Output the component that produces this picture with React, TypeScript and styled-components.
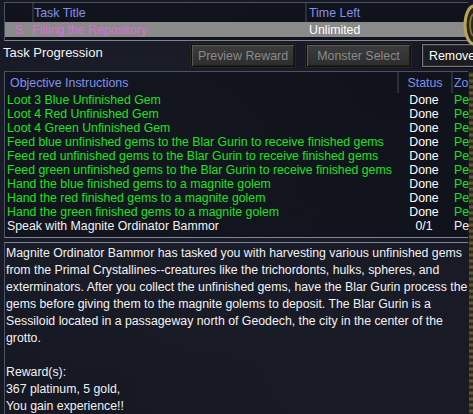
import React from "react";
import styled, { createGlobalStyle } from "styled-components";

const Global = createGlobalStyle`
  html, body { margin: 0; padding: 0; background: #151823; }
  * { box-sizing: border-box; }
`;

const Window = styled.div`
  position: relative;
  width: 473px;
  height: 414px;
  overflow: hidden;
  background:
    radial-gradient(ellipse at 30% 40%, rgba(40, 44, 60, 0.35), transparent 60%),
    radial-gradient(ellipse at 80% 80%, rgba(30, 30, 45, 0.4), transparent 50%),
    #161923;
  font-family: "Liberation Sans", Arial, sans-serif;
  font-size: 12.3px;
  color: #ffffff;
  display: flex;
  flex-direction: column;
  padding: 2px 0 0 4px;
`;

const Panel = styled.div<{ $h: number }>`
  height: ${(p) => p.$h}px;
  margin-right: 5px;
  border: 1px solid #4b5263;
  border-right: none;
  border-bottom-color: #7d8497;
  background: rgba(12, 14, 22, 0.55);
  display: flex;
  flex-direction: column;
  flex-shrink: 0;
`;

const Row = styled.div<{ $cols: string; $h: number; $sel?: boolean }>`
  display: grid;
  grid-template-columns: ${(p) => p.$cols};
  height: ${(p) => p.$h}px;
  align-items: center;
  background: ${(p) => (p.$sel ? "#8a8a8a" : "transparent")};
  white-space: nowrap;
  flex-shrink: 0;
`;

const HeadCell = styled.div<{ $divider?: boolean; $center?: boolean; $pl?: number }>`
  color: #8190ec;
  font-size: 12.4px;
  height: 100%;
  display: flex;
  align-items: center;
  justify-content: ${(p) => (p.$center ? "center" : "flex-start")};
  padding-left: ${(p) => p.$pl ?? 0}px;
  border-left: ${(p) => (p.$divider ? "2px solid #2b2f3a" : "none")};
  overflow: hidden;
`;

const Cell = styled.div<{ $color?: string; $center?: boolean; $pl?: number }>`
  color: ${(p) => p.$color || "#ffffff"};
  font-size: 12.3px;
  overflow: hidden;
  text-align: ${(p) => (p.$center ? "center" : "left")};
  padding-left: ${(p) => p.$pl ?? 0}px;
  line-height: 14px;
`;

const ProgressBar = styled.div`
  display: flex;
  align-items: flex-start;
  height: 30px;
  flex-shrink: 0;
  margin-left: -1px;
  padding-top: 3px;
`;

const Label = styled.div`
  font-size: 13px;
  line-height: 16px;
  color: #f4f4f4;
  width: 188px;
  flex-shrink: 0;
  margin-top: 1px;
`;

const Button = styled.div<{ $active?: boolean; $w: number }>`
  width: ${(p) => p.$w}px;
  height: 23px;
  flex-shrink: 0;
  margin-right: ${(p) => (p.$active ? 0 : 11)}px;
  display: flex;
  align-items: center;
  justify-content: ${(p) => (p.$active ? "flex-start" : "center")};
  padding-left: ${(p) => (p.$active ? 6 : 0)}px;
  font-size: 12.4px;
  color: ${(p) => (p.$active ? "#ffffff" : "#8a8a8a")};
  background: ${(p) =>
    p.$active ? "#1c1d22" : "linear-gradient(#3c3d3c, #2c2d2c)"};
  border: 1px solid ${(p) => (p.$active ? "#7c7c80" : "#101010")};
  box-shadow: ${(p) =>
    p.$active
      ? "inset 0 0 0 1px #2a2b30, 0 0 0 1px #0c0c0c"
      : "inset 1px 1px 0 #595a56, inset -1px -1px 0 #1d1d1d, 0 0 0 1px #262624"};
  white-space: nowrap;
  overflow: hidden;
`;

const ListBody = styled.div`
  display: flex;
  flex-direction: column;
`;

const Desc = styled.div`
  flex: 1;
  margin-top: 4px;
  margin-right: 5px;
  border-left: 1px solid #4b5263;
  border-top: 1px solid #7d8497;
  padding: 2px 0 0 1px;
  font-size: 12.3px;
  line-height: 17px;
  color: #f2f2f2;
  white-space: pre;
  overflow: hidden;
`;

const Ornament = styled.div`
  position: absolute;
  right: 0;
  top: 72px;
  width: 4px;
  bottom: 0;
  background: repeating-linear-gradient(
    180deg,
    #201d12 0px,
    #6b6138 3px,
    #201d12 6px
  );
`;

const Knob = styled.svg`
  position: absolute;
  right: -12px;
  top: 3px;
`;

const GREEN = "#1ee21e";

const objectives: [string, string, boolean][] = [
  ["Loot 3 Blue Unfinished Gem", "Done", true],
  ["Loot 4 Red Unfinished Gem", "Done", true],
  ["Loot 4 Green Unfinished Gem", "Done", true],
  ["Feed blue unfinished gems to the Blar Gurin to receive finished gems", "Done", true],
  ["Feed red unfinished gems to the Blar Gurin to receive finished gems", "Done", true],
  ["Feed green unfinished gems to the Blar Gurin to receive finished gems", "Done", true],
  ["Hand the blue finished gems to a magnite golem", "Done", true],
  ["Hand the red finished gems to a magnite golem", "Done", true],
  ["Hand the green finished gems to a magnite golem", "Done", true],
  ["Speak with Magnite Ordinator Bammor", "0/1", false],
];

const COLS = "392px 54px 20px";
const TOP_COLS = "27px 273px 1fr";

export default function App() {
  return (
    <>
      <Global />
      <Window>
        <Panel $h={39}>
          <Row $cols={TOP_COLS} $h={19}>
            <HeadCell />
            <HeadCell $divider $pl={0}>Task Title</HeadCell>
            <HeadCell $divider $pl={2}>Time Left</HeadCell>
          </Row>
          <Row $cols={TOP_COLS} $h={15} $sel>
            <Cell $color="#d56fd5" $pl={10}>S</Cell>
            <Cell $color="#d56fd5" $pl={0}>Filling the Repository</Cell>
            <Cell $pl={4}>Unlimited</Cell>
          </Row>
        </Panel>
        <ProgressBar>
          <Label>Task Progression</Label>
          <Button $w={104}>Preview Reward</Button>
          <Button $w={105}>Monster Select</Button>
          <Button $w={60} $active>Remove</Button>
        </ProgressBar>
        <Panel $h={167}>
          <Row $cols={COLS} $h={21}>
            <HeadCell $pl={5}>Objective Instructions</HeadCell>
            <HeadCell $divider $center>Status</HeadCell>
            <HeadCell $divider $pl={1}>Zo</HeadCell>
          </Row>
          <ListBody>
            {objectives.map(([t, s, done]) => (
              <Row key={t} $cols={COLS} $h={14}>
                <Cell $color={done ? GREEN : "#f2f2f2"} $pl={2}>{t}</Cell>
                <Cell $center>{s}</Cell>
                <Cell $color={done ? GREEN : "#f2f2f2"} $pl={3}>Pe</Cell>
              </Row>
            ))}
          </ListBody>
        </Panel>
        <Desc>{`Magnite Ordinator Bammor has tasked you with harvesting various unfinished gems
from the Primal Crystallines--creatures like the trichordonts, hulks, spheres, and
exterminators. After you collect the unfinished gems, have the Blar Gurin process the
gems before giving them to the magnite golems to deposit. The Blar Gurin is a
Sessiloid located in a passageway north of Geodech, the city in the center of the
grotto.

Reward(s):
367 platinum, 5 gold,
You gain experience!!`}</Desc>
        <Ornament />
        <Knob width="22" height="44" viewBox="0 0 22 44">
          <ellipse cx="11" cy="22" rx="9" ry="19" fill="#2b2718" stroke="#b8a55c" strokeWidth="3" />
          <ellipse cx="11" cy="22" rx="4" ry="11" fill="none" stroke="#7c6f3e" strokeWidth="2" />
        </Knob>
      </Window>
    </>
  );
}
